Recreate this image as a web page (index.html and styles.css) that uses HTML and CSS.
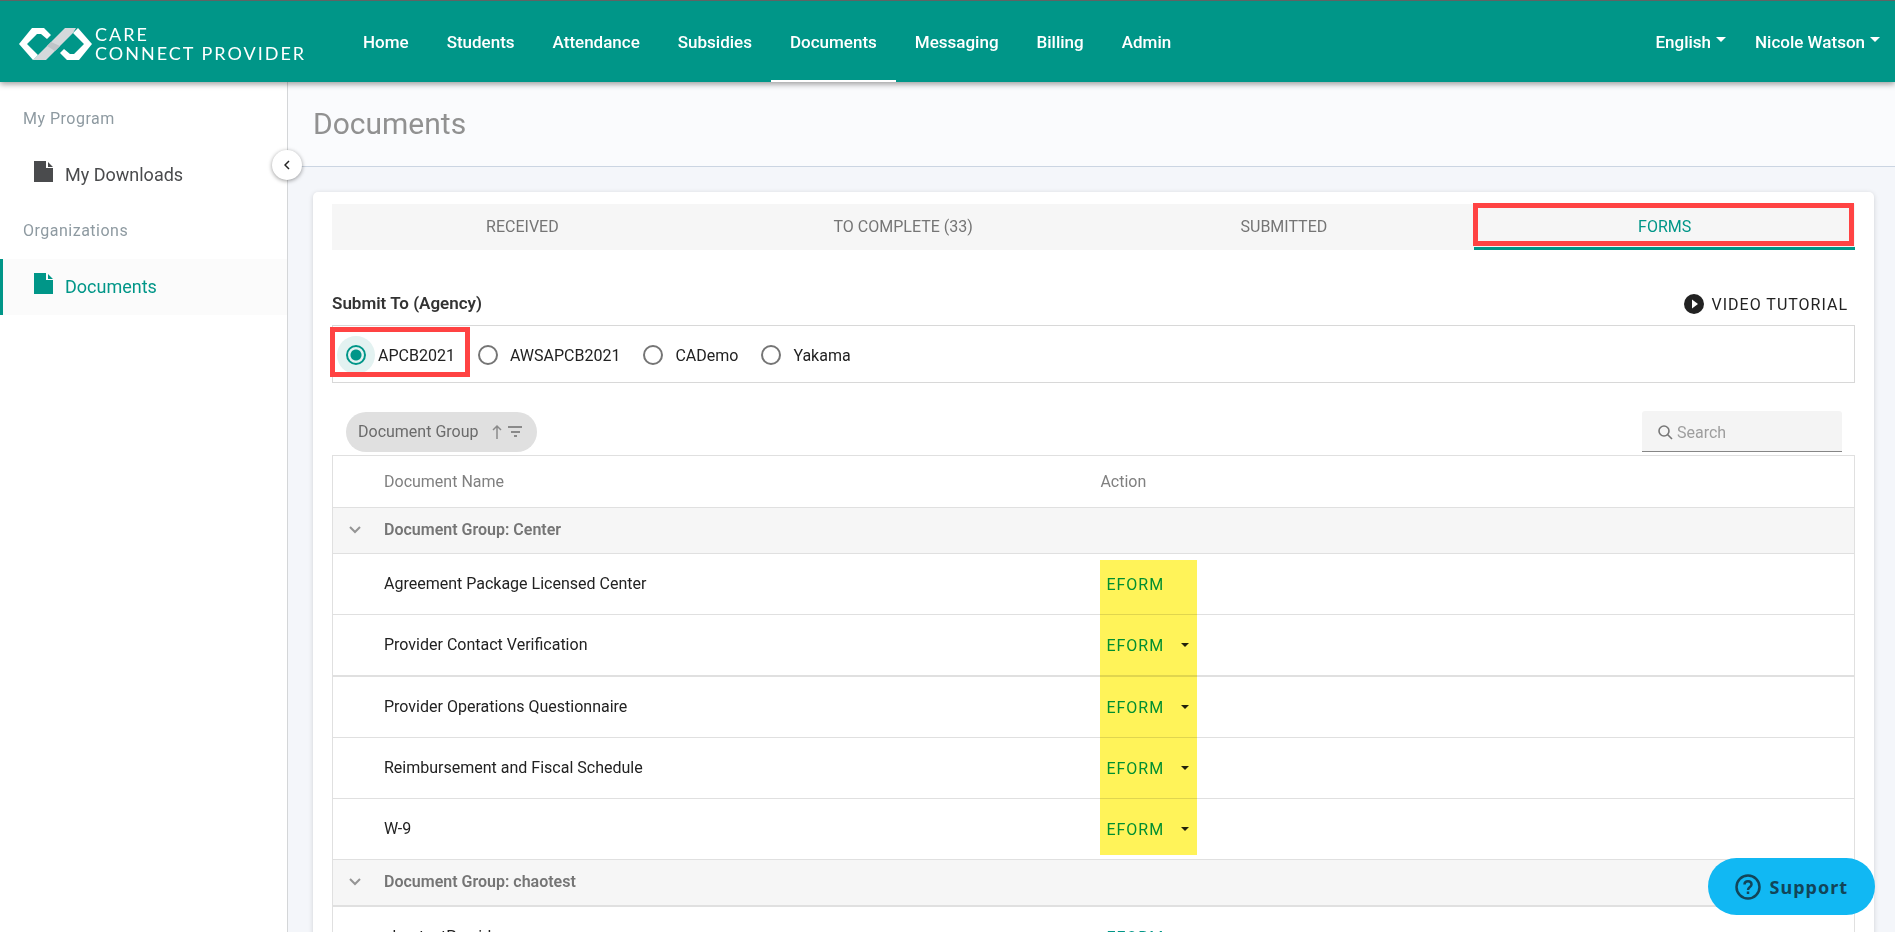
FILE: index.html
```html
<!DOCTYPE html>
<html lang="en">
<head>
    <meta charset="UTF-8">
    <meta name="viewport" content="width=device-width, initial-scale=1.0">
    <title>Documents - Care Connect Provider</title>
    <link rel="stylesheet" href="styles.css">
</head>
<body>
    <header class="navbar">
        <a href="#" class="brand">
            <svg class="brand-mark" viewBox="0 0 73 32" width="73" height="32" aria-hidden="true">
                <path d="M14 32L46 0H57L54 5L27 32Z" fill="#d5d9dc"/>
                <path d="M32 14L41 18L36 23L28 18Z" fill="#bfc4c8"/>
                <path d="M0 16L13 0H25L32 7L28 11L22 6H18L8 16L19 27L14 32Z" fill="#fff"/>
                <path d="M73 16L60 32H48L41 25L45 21L51 26H55L65 16L54 5L59 0Z" fill="#fff"/>
            </svg>
            <span class="brand-name">CARE<br>CONNECT PROVIDER</span>
        </a>
        <nav class="main-nav">
            <a href="#">Home</a>
            <a href="#">Students</a>
            <a href="#">Attendance</a>
            <a href="#">Subsidies</a>
            <a href="#" class="active">Documents</a>
            <a href="#">Messaging</a>
            <a href="#">Billing</a>
            <a href="#">Admin</a>
        </nav>
        <div class="user-nav">
            <button type="button" class="dropdown">English</button>
            <button type="button" class="dropdown">Nicole Watson</button>
        </div>
    </header>

    <div class="layout">
        <aside class="sidebar">
            <h2 class="side-title">My Program</h2>
            <a href="#" class="side-link">
                <svg viewBox="0 0 19 21" width="19" height="21" fill="currentColor" aria-hidden="true"><path d="M0 0H12V7H19V21H0ZM14 1L19 6H14Z"/></svg>
                My Downloads
            </a>
            <h2 class="side-title">Organizations</h2>
            <a href="#" class="side-link active">
                <svg viewBox="0 0 19 21" width="19" height="21" fill="currentColor" aria-hidden="true"><path d="M0 0H12V7H19V21H0ZM14 1L19 6H14Z"/></svg>
                Documents
            </a>
            <button type="button" class="side-toggle" aria-label="Collapse menu">
                <svg viewBox="0 0 6 10" width="6" height="10" fill="none" stroke="#222" stroke-width="1.500" aria-hidden="true"><path d="M5 1L1 5L5 9"/></svg>
            </button>
        </aside>

        <main class="content">
            <div class="page-head">
                <h1>Documents</h1>
            </div>

            <section class="card">
                <div class="tabs" role="tablist">
                    <button type="button" class="tab" role="tab">RECEIVED</button>
                    <button type="button" class="tab" role="tab">TO COMPLETE (33)</button>
                    <button type="button" class="tab" role="tab">SUBMITTED</button>
                    <button type="button" class="tab active" role="tab" aria-selected="true">FORMS</button>
                </div>

                <div class="agency-head">
                    <h3>Submit To (Agency)</h3>
                    <a href="#" class="tutorial">
                        <svg viewBox="0 0 20 20" width="20" height="20" aria-hidden="true"><circle cx="10" cy="10" r="10" fill="#222"/><path d="M8 5.500V14.500L14 10Z" fill="#fff"/></svg>
                        VIDEO TUTORIAL
                    </a>
                </div>

                <div class="agency-list">
                    <label class="agency marked"><input type="radio" name="agency" checked>APCB2021</label>
                    <label class="agency"><input type="radio" name="agency">AWSAPCB2021</label>
                    <label class="agency"><input type="radio" name="agency">CADemo</label>
                    <label class="agency"><input type="radio" name="agency">Yakama</label>
                </div>

                <div class="grid-bar">
                    <button type="button" class="group-chip">
                        Document Group
                        <svg viewBox="0 0 31 16" width="31" height="16" fill="none" stroke="#8a8a8a" aria-hidden="true">
                            <path d="M5 15V2M1 6L5 2L9 6" stroke-width="1.500"/>
                            <path d="M16 3H30M19 8H28M22 12H25" stroke-width="2"/>
                        </svg>
                    </button>
                    <label class="search">
                        <svg viewBox="0 0 15 15" width="15" height="15" fill="none" stroke="#777" stroke-width="1.600" aria-hidden="true"><circle cx="6" cy="6" r="5"/><path d="M9.500 9.500L14 14"/></svg>
                        <input type="search" placeholder="Search" aria-label="Search">
                    </label>
                </div>

                <table class="grid">
                    <colgroup>
                        <col class="col-toggle">
                        <col class="col-name">
                        <col>
                    </colgroup>
                    <thead>
                        <tr>
                            <th></th>
                            <th>Document Name</th>
                            <th>Action</th>
                        </tr>
                    </thead>
                    <tbody>
                        <tr class="group">
                            <td><svg viewBox="0 0 12 8" width="12" height="8" fill="none" stroke="#959595" stroke-width="2" aria-hidden="true"><path d="M1 1L6 6L11 1"/></svg></td>
                            <td colspan="2">Document Group: Center</td>
                        </tr>
                        <tr>
                            <td></td>
                            <td>Agreement Package Licensed Center</td>
                            <td class="action"><span class="highlight"></span><button type="button" class="eform">EFORM</button></td>
                        </tr>
                        <tr class="thick">
                            <td></td>
                            <td>Provider Contact Verification</td>
                            <td class="action"><button type="button" class="eform has-menu">EFORM</button></td>
                        </tr>
                        <tr>
                            <td></td>
                            <td>Provider Operations Questionnaire</td>
                            <td class="action"><button type="button" class="eform has-menu">EFORM</button></td>
                        </tr>
                        <tr>
                            <td></td>
                            <td>Reimbursement and Fiscal Schedule</td>
                            <td class="action"><button type="button" class="eform has-menu">EFORM</button></td>
                        </tr>
                        <tr>
                            <td></td>
                            <td>W-9</td>
                            <td class="action"><button type="button" class="eform has-menu">EFORM</button></td>
                        </tr>
                        <tr class="group thick">
                            <td><svg viewBox="0 0 12 8" width="12" height="8" fill="none" stroke="#959595" stroke-width="2" aria-hidden="true"><path d="M1 1L6 6L11 1"/></svg></td>
                            <td colspan="2">Document Group: chaotest</td>
                        </tr>
                        <tr>
                            <td></td>
                            <td>chaotestProvider</td>
                            <td class="action"><button type="button" class="eform">EFORM</button></td>
                        </tr>
                    </tbody>
                </table>
            </section>
        </main>
    </div>

    <button type="button" class="support">
        <svg viewBox="0 0 26 26" width="26" height="26" fill="none" stroke="currentColor" aria-hidden="true">
            <circle cx="13" cy="13" r="11.500" stroke-width="2.500"/>
            <path d="M9.500 10.500C9.500 6 16.500 6 16.500 10.500C16.500 13 13 13 13 16" stroke-width="2.500"/>
            <path d="M13 17.500V20" stroke-width="2.500"/>
        </svg>
        Support
    </button>
</body>
</html>
```
FILE: styles.css
```css
* {
    margin: 0;
    padding: 0;
    box-sizing: border-box;
}
body {
    font-family: Roboto, 'Liberation Sans', sans-serif;
    font-size: 16px;
    color: #222;
    background-color: #f4f6fa;
    height: 100vh;
    display: flex;
    flex-direction: column;
    overflow: hidden;
}
a {
    color: inherit;
    text-decoration: none;
}
button, input {
    font: inherit;
    color: inherit;
    border: none;
    background: none;
}
button {
    cursor: pointer;
}

/* Top bar */
.navbar {
    display: flex;
    flex-shrink: 0;
    height: 82px;
    padding: 0 15px 0 19px;
    background-color: #009688;
    border-top: 1px solid #5f6364;
    box-shadow: 0 2px 6px rgba(0,0,0,0.4);
    color: white;
    font-size: 17px;
    font-weight: 500;
    position: relative;
    z-index: 10;
}
.brand {
    display: flex;
    align-items: center;
    gap: 3px;
    width: 325px;
    padding-top: 5px;
}
.brand-name {
    font-family: Lato, sans-serif;
    font-size: 18px;
    font-weight: 400;
    line-height: 19px;
    letter-spacing: 2px;
    white-space: nowrap;
}
.main-nav {
    display: flex;
}
.main-nav a {
    display: flex;
    align-items: center;
    padding: 2px 19px 0;
    border-bottom: 2px solid transparent;
}
.main-nav a.active {
    border-bottom-color: white;
}
.user-nav {
    display: flex;
    gap: 29px;
    margin-left: auto;
}
.dropdown {
    display: flex;
    align-items: center;
    gap: 5px;
}
.dropdown::after {
    content: "";
    border: 5px solid transparent;
    border-top-color: white;
    border-bottom: none;
    margin-bottom: 4px;
}

/* Sidebar */
.layout {
    display: flex;
    flex: 1;
    min-height: 0;
}
.sidebar {
    position: relative;
    width: 288px;
    flex-shrink: 0;
    padding-top: 9px;
    background-color: white;
    border-right: 1px solid #d4d6d8;
}
.side-title {
    padding-left: 23px;
    font-size: 16px;
    font-weight: 400;
    line-height: 56px;
    letter-spacing: 0.5px;
    color: #8e9aa1;
}
.side-link {
    display: flex;
    align-items: center;
    gap: 12px;
    height: 56px;
    padding: 0 0 2px 31px;
    border-left: 3px solid transparent;
    font-size: 18px;
    color: #4a4b4d;
}
.side-link svg {
    margin-bottom: 6px;
}
.side-link.active {
    background-color: #fbfbfb;
    border-left-color: #009688;
    color: #009688;
}
.side-toggle {
    position: absolute;
    top: 68px;
    right: -15px;
    width: 30px;
    height: 30px;
    border-radius: 50%;
    background-color: white;
    box-shadow: 0 1px 4px rgba(0,0,0,0.4);
    display: flex;
    align-items: center;
    justify-content: center;
}

/* Content */
.content {
    flex: 1;
    min-width: 0;
    overflow: hidden;
}
.page-head {
    height: 85px;
    padding: 22px 25px;
    background-color: #fafbfd;
    border-bottom: 1px solid #cbd5e2;
}
.page-head h1 {
    font-size: 30px;
    font-weight: 400;
    line-height: 40px;
    color: #919191;
}
.card {
    margin: 25px 21px 0 25px;
    padding: 12px 19px;
    background-color: white;
    border-radius: 5px;
    box-shadow: 0 1px 5px rgba(0,0,0,0.15);
}
.tabs {
    display: grid;
    grid-template-columns: repeat(4, 1fr);
    background-color: #f6f6f6;
}
.tab {
    position: relative;
    height: 46px;
    padding-top: 2px;
    border-bottom: 3px solid transparent;
    color: #757575;
}
.tab.active {
    border-bottom-color: #009688;
    color: #009688;
}
.tab.active::after,
.agency.marked::after {
    content: "";
    position: absolute;
    border: 5px solid #ff4343;
}
.tab.active::after {
    inset: -1px 1px 1px -1px;
}
.agency-head {
    display: flex;
    align-items: center;
    justify-content: space-between;
    height: 75px;
    padding: 33px 7px 0 0;
}
.agency-head h3 {
    font-size: 17px;
    font-weight: 600;
    padding-bottom: 2px;
    color: #333;
}
.tutorial {
    display: flex;
    align-items: center;
    gap: 8px;
    letter-spacing: 1px;
}
.agency-list {
    display: flex;
    gap: 23px;
    height: 58px;
    padding: 2px 0 0 13px;
    border: 1px solid #d8d8d8;
}
.agency {
    position: relative;
    display: flex;
    align-items: center;
    gap: 12px;
}
.agency input {
    appearance: none;
    width: 20px;
    height: 20px;
    border: 2px solid #757575;
    border-radius: 50%;
}
.agency input:checked {
    border-color: #009688;
    background: radial-gradient(circle, #009688 5px, #e3f2f1 6px);
    box-shadow: 0 0 0 9px #e3f2f1;
}
.agency.marked::after {
    inset: -1px -15px 5px -16px;
}

/* Documents grid */
.grid-bar {
    display: flex;
    align-items: center;
    justify-content: space-between;
    padding: 28px 13px 3px 14px;
}
.group-chip {
    display: flex;
    align-items: center;
    gap: 14px;
    height: 40px;
    padding: 0 14px 0 12px;
    border-radius: 20px;
    background-color: #e0e0e0;
    color: #6b6b6b;
}
.search {
    display: flex;
    align-items: center;
    gap: 4px;
    width: 200px;
    height: 41px;
    padding: 2px 15px 0 16px;
    background-color: #f4f4f4;
    border-bottom: 1px solid #868686;
    border-radius: 3px 3px 0 0;
}
.search svg {
    flex-shrink: 0;
}
.search input {
    width: 100%;
    outline: none;
}
.search input::placeholder {
    color: #9e9e9e;
}
.grid {
    width: 100%;
    table-layout: fixed;
    border-collapse: separate;
    border-spacing: 0;
    border: 1px solid #e0e0e0;
    border-bottom: none;
}
.col-toggle {
    width: 51px;
}
.col-name {
    width: 47.1%;
}
.grid th {
    height: 52px;
    border-bottom: 1px solid #e0e0e0;
    text-align: left;
    font-weight: 400;
    color: #808080;
}
.grid td {
    height: 61px;
    padding-bottom: 2px;
    border-bottom: 1px solid #e0e0e0;
}
.grid .group td {
    height: 46px;
    background-color: #f6f6f6;
    font-weight: 600;
    color: #757575;
}
.grid .thick td {
    height: 62px;
    border-bottom-width: 2px;
}
.grid .group.thick td {
    height: 47px;
}
.group svg {
    display: block;
    margin-left: 16px;
}
.grid .action {
    position: relative;
    padding-bottom: 0;
    color: #009688;
}
.eform {
    display: flex;
    align-items: center;
    gap: 17px;
    padding-left: 6px;
    letter-spacing: 1px;
}
.eform.has-menu::after {
    content: "";
    border: 4px solid transparent;
    border-top-color: #222;
    border-bottom: none;
}
.highlight {
    position: absolute;
    z-index: 2;
    top: 6px;
    left: 0;
    width: 97px;
    height: 295px;
    background-color: #fff359;
    mix-blend-mode: multiply;
    pointer-events: none;
}

.support {
    position: fixed;
    right: 20px;
    bottom: 17px;
    z-index: 20;
    display: flex;
    align-items: center;
    gap: 9px;
    height: 57px;
    padding: 0 27px;
    border-radius: 29px;
    background-color: #11b8f3;
    color: #124559;
    font-family: 'Noto Sans', sans-serif;
    font-size: 18px;
    font-weight: 700;
    letter-spacing: 1px;
}
```
